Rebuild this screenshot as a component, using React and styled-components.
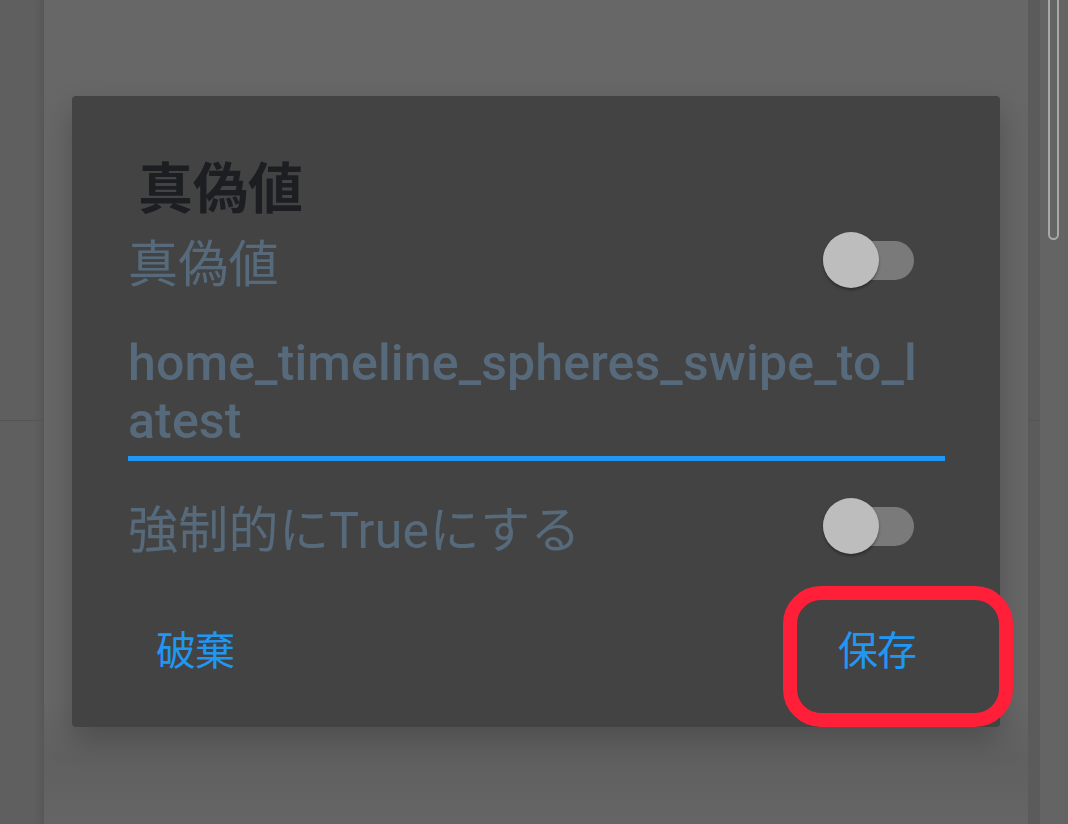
import React from "react";
import styled, { createGlobalStyle } from "styled-components";

const GlobalStyle = createGlobalStyle`
  html, body {
    margin: 0;
    padding: 0;
    background: #5f5f5f;
    overflow: hidden;
  }
`;

const Page = styled.div`
  display: flex;
  width: 1068px;
  height: 824px;
  font-family: Roboto, "Noto Sans CJK JP", sans-serif;
`;

const SideStrip = styled.div`
  width: ${({ width }) => width}px;
  flex: none;
  background: ${({ bg }) => bg};
  display: grid;
  grid-template-rows: 420px 1px 1fr;
  box-shadow: ${({ shade }) => (shade ? "inset -10px 0 10px -8px rgba(0,0,0,0.12)" : "none")};
`;

const Divider = styled.div`
  grid-row: 2;
  background: #555;
`;

const ScrollTrack = styled.div`
  width: 28px;
  flex: none;
  background: #646464;
  display: grid;
  grid-template-rows: 420px 1px 1fr;
  justify-items: start;
`;

const ScrollThumb = styled.div`
  grid-row: 1;
  align-self: start;
  margin: -8px 0 0 8px;
  width: 7px;
  height: 244px;
  border: 2px solid #a8a8a8;
  border-radius: 6px;
`;

const Main = styled.div`
  flex: 1;
  background: linear-gradient(#676767 0, #676767 700px, #606060 760px, #656565 824px);
  padding: 96px 28px 0;
`;

const Dialog = styled.div`
  position: relative;
  background: #434343;
  border-radius: 4px;
  padding: 48px 55px 34px 56px;
  box-shadow: 0 14px 30px rgba(0, 0, 0, 0.22);
`;

const Title = styled.div`
  height: 84px;
  line-height: 80px;
  padding-left: 10px;
  font-family: "Noto Sans CJK JP", sans-serif;
  font-weight: 700;
  font-size: 55px;
  color: #1c1e21;
`;

const Row = styled.div`
  display: flex;
  align-items: center;
  justify-content: space-between;
  height: 64px;
  margin-top: ${({ gap }) => gap}px;
`;

const Label = styled.span`
  font-size: 50px;
  color: #566a7b;
  letter-spacing: 0.3px;
  font-family: Roboto, "Noto Sans CJK JP", sans-serif;
`;

const Switch = styled.div`
  position: relative;
  width: 91px;
  height: 56px;
  margin-right: 31px;
  display: flex;
  align-items: center;
`;

const Track = styled.div`
  width: 100%;
  height: 39px;
  border-radius: 20px;
  background: #7a7a7a;
`;

const Thumb = styled.div`
  position: absolute;
  left: 0;
  top: 0;
  width: 56px;
  height: 56px;
  border-radius: 50%;
  background: #bdbdbd;
  box-shadow: 0 2px 3px rgba(0, 0, 0, 0.35);
`;

const Field = styled.div`
  margin-top: 42px;
  padding-bottom: 6px;
  border-bottom: 5px solid #2196f3;
`;

const FieldText = styled.div`
  width: 804px;
  font-size: 50px;
  font-weight: 500;
  letter-spacing: 0.15px;
  color: #566a7b;
  word-break: break-all;
`;

const Actions = styled.div`
  display: flex;
  justify-content: space-between;
  align-items: center;
  height: 90px;
  margin: 45px -7px 0 -8px;
`;

const ActionButton = styled.div`
  position: relative;
  height: 90px;
  display: flex;
  align-items: center;
  padding: 0 36px;
  font-family: "Noto Sans CJK JP", sans-serif;
  font-size: 40px;
  letter-spacing: -1px;
  color: #2196f3;
`;

const Highlight = styled.div`
  position: absolute;
  top: -17px;
  left: -19px;
  right: -61px;
  bottom: -34px;
  border: 14px solid #ff1f38;
  border-radius: 38px;
`;

const Toggle = () => (
  <Switch>
    <Track />
    <Thumb />
  </Switch>
);

export default function App() {
  return (
    <>
      <GlobalStyle />
      <Page>
        <SideStrip width={44} bg="#5f5f5f" shade>
          <Divider />
        </SideStrip>
        <Main>
          <Dialog>
            <Title>真偽値</Title>
            <Row gap={0}>
              <Label>真偽値</Label>
              <Toggle />
            </Row>
            <Field>
              <FieldText>home_timeline_spheres_swipe_to_latest</FieldText>
            </Field>
            <Row gap={33}>
              <Label>強制的にTrueにする</Label>
              <Toggle />
            </Row>
            <Actions>
              <ActionButton>破棄</ActionButton>
              <ActionButton>
                保存
                <Highlight />
              </ActionButton>
            </Actions>
          </Dialog>
        </Main>
        <SideStrip width={12} bg="#5b5b5b">
          <Divider />
        </SideStrip>
        <ScrollTrack>
          <ScrollThumb />
          <Divider />
        </ScrollTrack>
      </Page>
    </>
  );
}
